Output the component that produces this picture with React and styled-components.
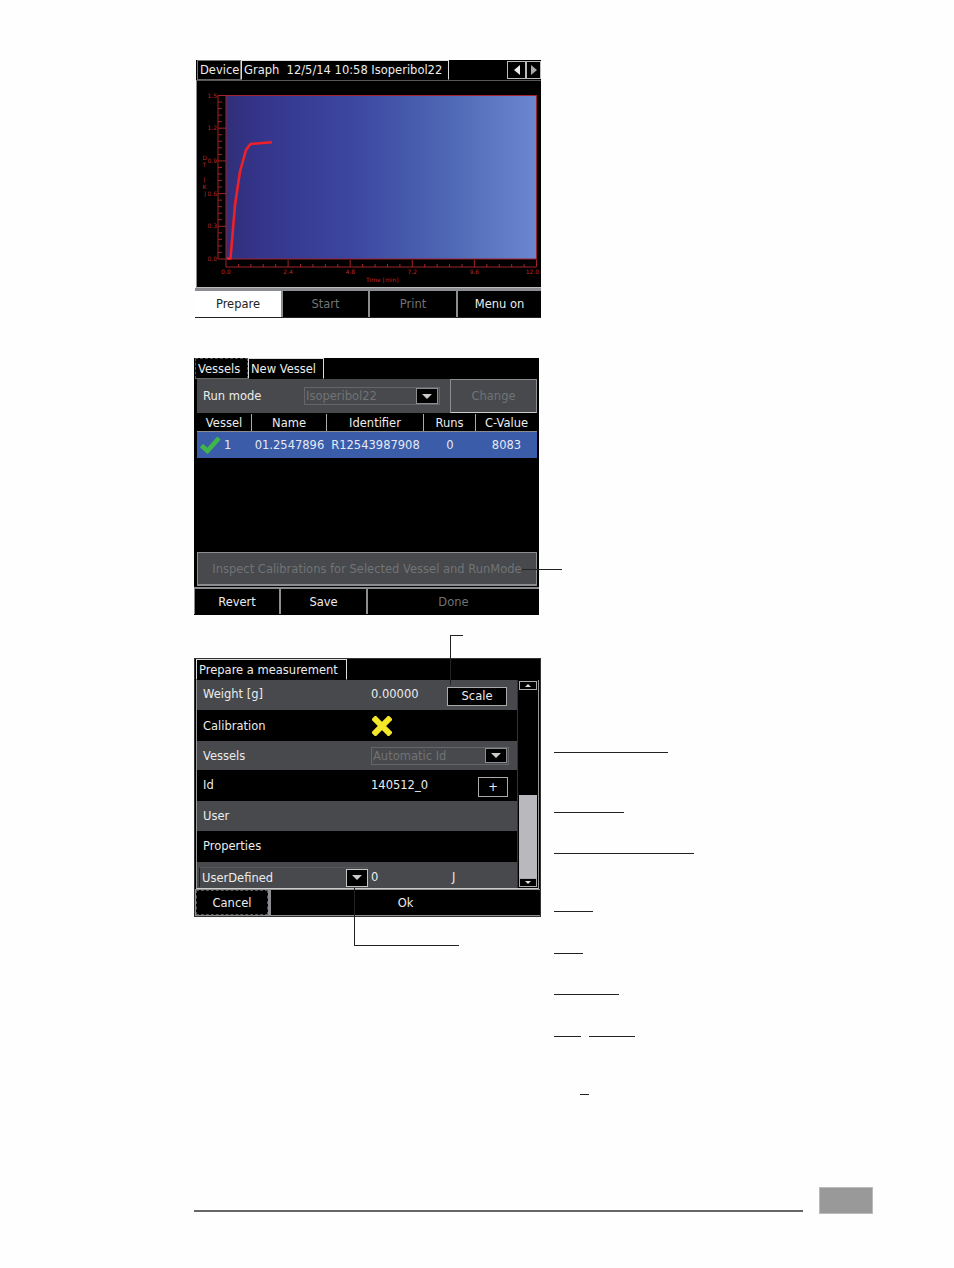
import styled, { createGlobalStyle } from 'styled-components';

const GlobalStyle = createGlobalStyle`
  html, body {
    margin: 0;
    padding: 0;
    background: #fefefe;
  }
  * {
    box-sizing: border-box;
  }
`;

const GRAY = '#47494c';
const LINE = '#8b8d90';
const TEXT = '#ececec';
const MUTED = '#717376';
const RED = '#a02428';

const xLabels = ['0.0', '2.4', '4.8', '7.2', '9.6', '12.0'];
const yLabels = ['0.0', '0.3', '0.6', '0.9', '1.2', '1.5'];
const rules = [
  { top: 692, width: 114 },
  { top: 59, width: 70 },
  { top: 40, width: 140 },
  { top: 57, width: 39 },
  { top: 41, width: 29 },
  { top: 40, width: 65 },
];

const Chart = () => {
  const plotLeft = 226;
  const plotRight = 536.5;
  const plotTop = 95.5;
  const plotBottom = 259;
  const xStep = (plotRight - plotLeft) / 25;
  const yStep = (plotBottom - plotTop) / 25;

  return (
    <svg width="343" height="206" viewBox="197 81 343 206" style={{ display: 'block' }}>
      <defs>
        <linearGradient id="plotFill" x1="0" x2="1" y1="0" y2="0">
          <stop offset="0" stopColor="#312f78" />
          <stop offset="0.1" stopColor="#34348a" />
          <stop offset="0.4" stopColor="#3c469f" />
          <stop offset="0.7" stopColor="#4d66b3" />
          <stop offset="1" stopColor="#6c87d2" />
        </linearGradient>
      </defs>
      <rect x={plotLeft} y={plotTop} width={plotRight - plotLeft} height={plotBottom - plotTop} fill="url(#plotFill)" stroke={RED} />
      <path d={`M${plotLeft} 267H${plotRight}M218 ${plotTop}V${plotBottom}`} stroke={RED} fill="none" />
      {Array.from({ length: 26 }, (_, i) => (
        <g key={i} stroke={RED}>
          <line x1={plotLeft + i * xStep} x2={plotLeft + i * xStep} y1={i % 5 === 0 ? 260 : 264} y2="267" />
          <line x1="218" x2={i % 5 === 0 ? 226 : 222} y1={plotTop + i * yStep} y2={plotTop + i * yStep} />
        </g>
      ))}
      <g fill="#b32a2e" fontFamily="'DejaVu Sans', sans-serif" fontSize="6">
        {xLabels.map((label, i) => (
          <text key={label} x={i === 5 ? 539 : plotLeft + i * xStep * 5} y="274" textAnchor={i === 5 ? 'end' : 'middle'}>{label}</text>
        ))}
        {yLabels.map((label, i) => (
          <text key={label} x="207.5" y={plotBottom + 2 - i * yStep * 5}>{label}</text>
        ))}
        <text x="366" y="282">Time [min]</text>
        <text x="202.5" y="160">D</text>
        <text x="202.5" y="167">T</text>
        <text x="203.5" y="182">[</text>
        <text x="202.5" y="189">K</text>
        <text x="203.5" y="196">]</text>
      </g>
      <path
        d="M227 258.5H230.5L235 205L240 171.5L246 150L250.5 144L272 142.3"
        fill="none"
        stroke="#ee2028"
        strokeWidth="2.6"
        strokeLinejoin="round"
      />
    </svg>
  );
};

const CheckIcon = () => (
  <svg width="22" height="20" viewBox="0 0 22 20" style={{ display: 'block', flex: 'none' }}>
    <path d="M2.5 10.5L8.5 16L20 3" fill="none" stroke="#3fb54a" strokeWidth="4.6" />
  </svg>
);

const CrossIcon = () => (
  <CrossSvg width="20" height="20" viewBox="0 0 20 20">
    <path d="M3.5 3.5L16.5 16.5M16.5 3.5L3.5 16.5" stroke="#f4e82a" strokeWidth="6" strokeLinecap="square" />
  </CrossSvg>
);

const App = () => (
  <Page>
    <GlobalStyle />
    <Content>
      <ScreenColumn>
        <GraphPanel>
          <GraphTop>
            <TabBar $height={20}>
              <Tab $width={44} $dim>Device</Tab>
              <Tab $width={208}>Graph&nbsp;&nbsp;12/5/14 10:58 Isoperibol22</Tab>
              <Arrows>
                <ArrowButton $width={19}><TriangleLeft /></ArrowButton>
                <ArrowButton $width={15}><TriangleRight /></ArrowButton>
              </Arrows>
            </TabBar>
            <ChartFrame>
              <Chart />
            </ChartFrame>
          </GraphTop>
          <ButtonBar $height={29} $top={3}>
            <ActionButton $width={86} $active>Prepare</ActionButton>
            <ActionButton $width={85} $disabled>Start</ActionButton>
            <ActionButton $width={86} $disabled>Print</ActionButton>
            <ActionButton $grow>Menu on</ActionButton>
          </ButtonBar>
        </GraphPanel>

        <VesselPanel>
          <TabBar $height={21}>
            <Tab $width={53} $dim $dashed>Vessels</Tab>
            <Tab $width={76}>New Vessel</Tab>
          </TabBar>
          <VesselBody>
            <RunModeRow>
              <RunModeLabel>Run mode</RunModeLabel>
              <Combo $width={136}>
                <ComboText>Isoperibol22</ComboText>
                <DropButton $width={22} $height={16}><TriangleDown /></DropButton>
              </Combo>
              <ChangeButton>Change</ChangeButton>
            </RunModeRow>
            <HeaderRow>
              <HeaderCell $width={55}>Vessel</HeaderCell>
              <HeaderCell $width={75}>Name</HeaderCell>
              <HeaderCell $width={97}>Identifier</HeaderCell>
              <HeaderCell $width={52}>Runs</HeaderCell>
              <HeaderCell $width={61}>C-Value</HeaderCell>
            </HeaderRow>
            <SelectedRow>
              <VesselCell><CheckIcon />1</VesselCell>
              <DataCell $width={75}>01.2547896</DataCell>
              <DataCell $width={97}>R12543987908</DataCell>
              <DataCell $width={52}>0</DataCell>
              <DataCell $width={61}>8083</DataCell>
            </SelectedRow>
            <EmptyRows />
            <InspectButton>Inspect Calibrations for Selected Vessel and RunMode</InspectButton>
          </VesselBody>
          <ButtonBar $height={27} $top={2} $left={1}>
            <ActionButton $width={84}>Revert</ActionButton>
            <ActionButton $width={85}>Save</ActionButton>
            <ActionButton $grow $disabled>Done</ActionButton>
          </ButtonBar>
          <InspectLeader />
        </VesselPanel>

        <PreparePanel>
          <TabBar $height={21}>
            <Tab $width={151}>Prepare a measurement</Tab>
          </TabBar>
          <PrepareBody>
            <FormList>
              <FormRow $gray $height={30}>
                <RowLabel $lift>Weight [g]</RowLabel>
                <RowValue $lift>0.00000</RowValue>
                <SmallButton $width={60} $height={19} $right={10}>Scale</SmallButton>
              </FormRow>
              <FormRow $height={31}>
                <RowLabel>Calibration</RowLabel>
                <RowValue><CrossIcon /></RowValue>
              </FormRow>
              <FormRow $gray $height={29}>
                <RowLabel>Vessels</RowLabel>
                <Combo $width={138}>
                  <ComboText>Automatic Id</ComboText>
                  <DropButton $width={22} $height={15}><TriangleDown /></DropButton>
                </Combo>
              </FormRow>
              <FormRow $height={31}>
                <RowLabel $lift>Id</RowLabel>
                <RowValue $lift>140512_0</RowValue>
                <SmallButton $width={30} $height={20} $right={9}>+</SmallButton>
              </FormRow>
              <FormRow $gray $height={30}>
                <RowLabel>User</RowLabel>
              </FormRow>
              <FormRow $height={31}>
                <RowLabel $lift>Properties</RowLabel>
              </FormRow>
              <UserDefinedRow>
                <UserDefinedCombo>
                  UserDefined
                  <DropButton $width={22} $height={18} $light><TriangleDown /></DropButton>
                </UserDefinedCombo>
                <UserValue>0</UserValue>
                <UserUnit>J</UserUnit>
              </UserDefinedRow>
            </FormList>
            <ScrollBar>
              <ScrollArrow><TriangleUpSmall /></ScrollArrow>
              <ScrollTrack />
              <ScrollThumb />
              <ScrollArrow><TriangleDownSmall /></ScrollArrow>
            </ScrollBar>
          </PrepareBody>
          <PrepareFooter>
            <ActionButton $width={72} $dashed>Cancel</ActionButton>
            <ActionButton $grow>Ok</ActionButton>
          </PrepareFooter>
          <ScaleLeader />
          <ComboLeader />
        </PreparePanel>
      </ScreenColumn>

      <RuleColumn>
        {rules.map((rule) => (
          <Rule key={rule.top + '-' + rule.width} $top={rule.top} $width={rule.width} />
        ))}
        <RulePair>
          <Rule $top={0} $width={27} />
          <Rule $top={0} $width={46} />
        </RulePair>
        <ShortRule />
      </RuleColumn>
    </Content>
    <Footer>
      <FooterLine />
      <PageBox />
    </Footer>
  </Page>
);

export default App;

const Page = styled.div`
  display: flex;
  flex-direction: column;
  width: 954px;
  height: 1268px;
  padding: 60px 0 0 194px;
  background: #fefefe;
  font-family: 'DejaVu Sans', 'Liberation Sans', sans-serif;
  font-size: 11.5px;
  overflow: hidden;
`;

const Content = styled.div`
  display: flex;
  height: 1127px;
`;

const ScreenColumn = styled.div`
  display: flex;
  flex-direction: column;
  width: 347px;
`;

const GraphPanel = styled.section`
  width: 346px;
  height: 258px;
  margin-left: 1px;
  border-bottom: 1px solid #222;
`;

const GraphTop = styled.div`
  margin-left: 1px;
  background: #000;
`;

const TabBar = styled.div`
  display: flex;
  align-items: flex-end;
  height: ${({ $height }) => $height}px;
  padding-left: 1px;
  background: #000;
`;

const Tab = styled.div`
  display: flex;
  align-items: center;
  width: ${({ $width }) => $width}px;
  height: 100%;
  padding-left: 2px;
  border: 1px ${({ $dashed }) => ($dashed ? 'dashed' : 'solid')} ${({ $dim, $dashed }) => ($dashed ? '#555' : $dim ? '#777' : '#ddd')};
  border-bottom: ${({ $dim }) => ($dim ? '1px solid #666' : '1px solid #000')};
  color: ${TEXT};
  white-space: nowrap;
`;

const Arrows = styled.div`
  display: flex;
  height: 18px;
  margin: 0 0 1px auto;
`;

const ArrowButton = styled.div`
  display: flex;
  align-items: center;
  justify-content: center;
  width: ${({ $width }) => $width}px;
  border: 1px solid #bbb;
`;

const TriangleLeft = styled.span`
  border-top: 5px solid transparent;
  border-bottom: 5px solid transparent;
  border-right: 6px solid #eee;
`;

const TriangleRight = styled.span`
  border-top: 5px solid transparent;
  border-bottom: 5px solid transparent;
  border-left: 6px solid #aaa;
`;

const TriangleDown = styled.span`
  border-left: 5px solid transparent;
  border-right: 5px solid transparent;
  border-top: 5px solid #ccc;
`;

const TriangleUpSmall = styled.span`
  border-left: 3px solid transparent;
  border-right: 3px solid transparent;
  border-bottom: 3px solid #ddd;
`;

const TriangleDownSmall = styled.span`
  border-left: 3px solid transparent;
  border-right: 3px solid transparent;
  border-top: 3px solid #ddd;
`;

const ChartFrame = styled.div`
  height: 208px;
  border-left: 1px solid ${LINE};
  border-top: 1px solid #555;
  border-bottom: 1px solid #bbb;
  background: #000;
`;

const ButtonBar = styled.div`
  display: flex;
  gap: 2px;
  height: ${({ $height }) => $height}px;
  padding: ${({ $top }) => $top}px 0 0 ${({ $left }) => $left || 0}px;
  background: ${LINE};
  & > * {
    height: 100%;
  }
`;

const ActionButton = styled.div`
  display: flex;
  align-items: center;
  justify-content: center;
  flex: ${({ $grow }) => ($grow ? '1' : 'none')};
  width: ${({ $grow, $width }) => ($grow ? 'auto' : `${$width}px`)};
  background: ${({ $active }) => ($active ? '#fff' : '#000')};
  border: ${({ $dashed }) => ($dashed ? '1px dashed #555' : 'none')};
  color: ${({ $active, $disabled }) => ($active ? '#222' : $disabled ? MUTED : TEXT)};
`;

const VesselPanel = styled.section`
  position: relative;
  width: 345px;
  height: 257px;
  margin-top: 40px;
  background: #000;
`;

const VesselBody = styled.div`
  display: flex;
  flex-direction: column;
  height: 207px;
  margin: 0 2px 1px 3px;
  border-bottom: 1px solid ${LINE};
`;

const RunModeRow = styled.div`
  display: flex;
  align-items: center;
  height: 34px;
  padding-left: 6px;
  background: ${GRAY};
  color: ${TEXT};
`;

const RunModeLabel = styled.span`
  width: 101px;
`;

const Combo = styled.div`
  display: flex;
  align-items: center;
  justify-content: space-between;
  width: ${({ $width }) => $width}px;
  height: 18px;
  padding-right: 1px;
  background: ${GRAY};
  border: 1px solid #64666a;
  color: ${MUTED};
`;

const ComboText = styled.span`
  padding-left: 1px;
  white-space: nowrap;
`;

const DropButton = styled.span`
  display: flex;
  flex: none;
  align-items: center;
  justify-content: center;
  width: ${({ $width }) => $width}px;
  height: ${({ $height }) => $height}px;
  background: #000;
  border: 1px solid ${({ $light }) => ($light ? '#c4c4c4' : LINE)};
`;

const ChangeButton = styled.div`
  display: flex;
  align-items: center;
  justify-content: center;
  align-self: stretch;
  width: 87px;
  margin-left: auto;
  border: 1px solid ${LINE};
  border-bottom: 1px solid #ccc;
  background: ${GRAY};
  color: ${MUTED};
`;

const HeaderRow = styled.div`
  display: flex;
  height: 19px;
  padding-top: 1px;
  border-bottom: 1px solid ${LINE};
`;

const HeaderCell = styled.div`
  display: flex;
  align-items: center;
  justify-content: center;
  width: ${({ $width }) => $width}px;
  border-right: 1px solid #aaa;
  color: ${TEXT};
  &:last-child {
    border-right: none;
  }
`;

const SelectedRow = styled.div`
  display: flex;
  flex: none;
  align-items: center;
  height: 26px;
  background: #3a5ca9;
  color: #e6e9f2;
`;

const VesselCell = styled.div`
  display: flex;
  align-items: center;
  gap: 3px;
  width: 55px;
  padding-left: 2px;
`;

const DataCell = styled.div`
  width: ${({ $width }) => $width}px;
  text-align: center;
  white-space: nowrap;
`;

const EmptyRows = styled.div`
  flex: 1;
  background: #000;
`;

const InspectButton = styled.div`
  display: flex;
  flex: none;
  align-items: center;
  justify-content: center;
  height: 33px;
  background: ${GRAY};
  border: 1px solid ${LINE};
  color: ${MUTED};
  white-space: nowrap;
`;

const InspectLeader = styled.span`
  position: absolute;
  left: 328px;
  top: 211px;
  width: 40px;
  height: 1px;
  background: #222;
`;

const PreparePanel = styled.section`
  position: relative;
  width: 347px;
  height: 259px;
  margin-top: 43px;
  background: #000;
  border: 1px solid #333;
`;

const PrepareBody = styled.div`
  display: flex;
  height: 209px;
  margin: 0 1px;
  border-bottom: 1px solid #ccc;
  border-right: 1px solid #999;
  border-left: 1px solid #999;
`;

const FormList = styled.div`
  display: flex;
  flex: none;
  flex-direction: column;
  width: 320px;
`;

const FormRow = styled.div`
  display: flex;
  align-items: center;
  flex: none;
  height: ${({ $height }) => $height}px;
  padding-left: 6px;
  background: ${({ $gray }) => ($gray ? GRAY : '#000')};
  color: ${TEXT};
`;

const RowLabel = styled.span`
  width: 168px;
  padding-bottom: ${({ $lift }) => ($lift ? '2px' : '0')};
`;

const RowValue = styled.span`
  display: block;
  padding-bottom: ${({ $lift }) => ($lift ? '2px' : '0')};
`;

const CrossSvg = styled.svg`
  display: block;
  margin-left: 1px;
`;

const SmallButton = styled.div`
  display: flex;
  align-items: center;
  justify-content: center;
  width: ${({ $width }) => $width}px;
  height: ${({ $height }) => $height}px;
  margin: 2px ${({ $right }) => $right}px 0 auto;
  background: #000;
  border: 1px solid #aaa;
  color: ${TEXT};
`;

const UserDefinedRow = styled.div`
  display: flex;
  align-items: flex-end;
  flex: 1;
  padding: 0 0 1px 2px;
  background: ${GRAY};
  color: ${TEXT};
`;

const UserDefinedCombo = styled.div`
  display: flex;
  align-items: center;
  justify-content: space-between;
  width: 169px;
  height: 20px;
  padding-left: 2px;
  border-left: 1px solid #222;
  border-top: 1px solid #55575a;
`;

const UserValue = styled.span`
  width: 81px;
  margin: 0 0 3px 3px;
`;

const UserUnit = styled.span`
  margin-bottom: 3px;
`;

const ScrollBar = styled.div`
  display: flex;
  flex-direction: column;
  width: 21px;
  padding: 1px;
  border-left: 1px solid #333;
`;

const ScrollArrow = styled.div`
  display: flex;
  flex: none;
  align-items: center;
  justify-content: center;
  height: 9px;
  background: #000;
  border: 1px solid #aaa;
`;

const ScrollTrack = styled.div`
  height: 105px;
  background: #000;
`;

const ScrollThumb = styled.div`
  flex: 1;
  background: #b9b9bd;
`;

const PrepareFooter = styled.div`
  display: flex;
  gap: 3px;
  height: 27px;
  padding: 1px 0 1px 1px;
  background: ${LINE};
`;

const ScaleLeader = styled.span`
  position: absolute;
  left: 255px;
  top: -24px;
  width: 13px;
  height: 50px;
  border-left: 1px solid #222;
  border-top: 1px solid #222;
`;

const ComboLeader = styled.span`
  position: absolute;
  left: 159px;
  top: 229px;
  width: 105px;
  height: 58px;
  border-left: 1px solid #222;
  border-bottom: 1px solid #222;
`;

const RuleColumn = styled.div`
  display: flex;
  flex-direction: column;
  margin-left: 13px;
`;

const Rule = styled.span`
  display: block;
  flex: none;
  width: ${({ $width }) => $width}px;
  height: 1px;
  margin-top: ${({ $top }) => $top}px;
  background: #222;
`;

const RulePair = styled.div`
  display: flex;
  gap: 8px;
  margin-top: 41px;
`;

const ShortRule = styled.span`
  display: block;
  width: 9px;
  height: 1px;
  margin: 57px 0 0 26px;
  background: #222;
`;

const Footer = styled.footer`
  display: flex;
  align-items: flex-end;
  gap: 16px;
`;

const FooterLine = styled.span`
  display: block;
  width: 609px;
  height: 2px;
  margin-bottom: 2px;
  background: #666;
`;

const PageBox = styled.span`
  display: block;
  width: 54px;
  height: 27px;
  background: #999;
  border: 1px solid #bbb;
`;
